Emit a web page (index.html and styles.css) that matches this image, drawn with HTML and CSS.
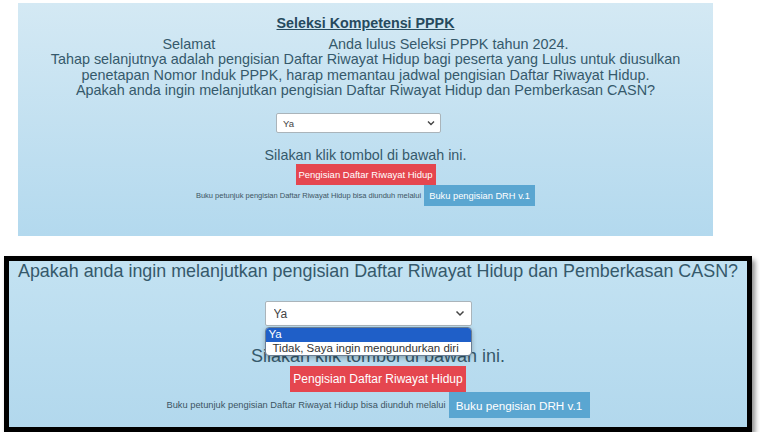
FILE: index.html
```html
<!DOCTYPE html>
<html lang="id">
<head>
    <meta charset="UTF-8">
    <meta name="viewport" content="width=device-width, initial-scale=1.0">
    <title>Seleksi Kompetensi PPPK</title>
    <link rel="stylesheet" href="styles.css">
</head>
<body>
    <div class="panel">
        <h1 class="title">Seleksi Kompetensi PPPK</h1>
        <p class="intro">
            Selamat <span class="name-blank"></span> Anda lulus Seleksi PPPK tahun 2024.<br>
            Tahap selanjutnya adalah pengisian Daftar Riwayat Hidup bagi peserta yang Lulus untuk diusulkan<br>
            penetapan Nomor Induk PPPK, harap memantau jadwal pengisian Daftar Riwayat Hidup.<br>
            Apakah anda ingin melanjutkan pengisian Daftar Riwayat Hidup dan Pemberkasan CASN?
        </p>
        <div class="select-row">
            <div class="select-wrap">
                <select class="choice">
                    <option>Ya</option>
                    <option>Tidak, Saya ingin mengundurkan diri</option>
                </select>
                <svg class="chevron" width="8" height="6" viewBox="0 0 8 6"><path d="M1 1.5 L4 4.5 L7 1.5" fill="none" stroke="#444" stroke-width="1.4"/></svg>
            </div>
        </div>
        <p class="hint">Silakan klik tombol di bawah ini.</p>
        <div class="btn-row">
            <button class="btn btn-red">Pengisian Daftar Riwayat Hidup</button>
        </div>
        <div class="guide-row">
            <span class="guide-text">Buku petunjuk pengisian Daftar Riwayat Hidup bisa diunduh melalui</span>
            <button class="btn btn-blue">Buku pengisian DRH v.1</button>
        </div>
    </div>

    <div class="zoom-frame">
        <div class="zoom-panel">
            <p class="zoom-question">Apakah anda ingin melanjutkan pengisian Daftar Riwayat Hidup dan Pemberkasan CASN?</p>
            <div class="select-row zoom-select-row">
                <div class="select-wrap">
                    <select class="choice zoom-choice">
                        <option>Ya</option>
                        <option>Tidak, Saya ingin mengundurkan diri</option>
                    </select>
                    <svg class="chevron zoom-chevron" width="10" height="7" viewBox="0 0 10 7"><path d="M1.5 1.5 L5 5 L8.5 1.5" fill="none" stroke="#444" stroke-width="1.5"/></svg>
                    <ul class="dropdown">
                        <li class="active">Ya</li>
                        <li>Tidak, Saya ingin mengundurkan diri</li>
                    </ul>
                </div>
            </div>
            <p class="zoom-hint">Silakan klik tombol di bawah ini.</p>
            <div class="btn-row">
                <button class="btn btn-red zoom-btn-red">Pengisian Daftar Riwayat Hidup</button>
            </div>
            <div class="guide-row zoom-guide-row">
                <span class="guide-text zoom-guide-text">Buku petunjuk pengisian Daftar Riwayat Hidup bisa diunduh melalui</span>
                <button class="btn btn-blue zoom-btn-blue">Buku pengisian DRH v.1</button>
            </div>
        </div>
    </div>
</body>
</html>
```

FILE: styles.css
```css
:root {
    --text-color: #35596b;
    --title-color: #264a5e;
    --red: #e5464f;
    --blue: #5aa6d1;
}
body {
    margin: 0;
    padding: 3px 0 0 0;
    background-color: #fff;
    font-family: 'Liberation Sans', Arial, sans-serif;
    color: var(--text-color);
}
.panel {
    margin-left: 18px;
    width: 695px;
    height: 233px;
    box-sizing: border-box;
    padding: 10px 0 0 0;
    background: linear-gradient(to bottom, #d4e9f4, #b3d9ee);
    text-align: center;
}
.title {
    margin: 0 0 4px 0;
    font-size: 14.3px;
    line-height: 20px;
    font-weight: bold;
    text-decoration: underline;
    color: var(--title-color);
}
.intro {
    margin: 0;
    font-size: 14.4px;
    line-height: 15.3px;
}
.name-blank {
    display: inline-block;
    width: 106px;
}
.select-row {
    display: flex;
    justify-content: center;
    padding-right: 14px;
    margin-top: 15px;
}
.select-wrap {
    position: relative;
}
.choice {
    appearance: none;
    -webkit-appearance: none;
    display: block;
    width: 165px;
    height: 20px;
    box-sizing: border-box;
    padding: 0 6px;
    border: 1px solid #aab4ba;
    border-radius: 2px;
    background-color: #fff;
    font-family: inherit;
    font-size: 9.5px;
    color: #444;
}
.chevron {
    position: absolute;
    right: 6px;
    top: 7px;
}
.hint {
    margin: 14px 0 0 0;
    font-size: 14.3px;
    line-height: 17px;
}
.btn-row {
    display: flex;
    justify-content: center;
}
.btn {
    border: none;
    color: #fff;
    font-family: inherit;
    cursor: pointer;
    padding: 0;
}
.btn-red {
    background-color: var(--red);
    width: 140px;
    height: 21px;
    font-size: 9.5px;
}
.btn-blue {
    background-color: var(--blue);
    width: 111px;
    height: 21px;
    font-size: 9.3px;
}
.guide-row {
    display: flex;
    justify-content: center;
    align-items: center;
    gap: 3px;
}
.guide-text {
    font-size: 7.5px;
    color: #3d5563;
}

/* bagian yang diperbesar */
.zoom-frame {
    margin: 20px 0 0 4px;
    width: 748px;
    box-sizing: border-box;
    border: 5px solid #000;
    box-shadow: 3px 4px 5px rgba(0, 0, 0, 0.45);
}
.zoom-panel {
    height: 166px;
    box-sizing: border-box;
    background: linear-gradient(to bottom, #c3e2f2, #b2d8ed);
    text-align: center;
}
.zoom-question {
    margin: 0;
    font-size: 17.9px;
    line-height: 20px;
}
.zoom-select-row {
    margin-top: 20px;
    padding-right: 20px;
}
.zoom-choice {
    width: 207px;
    height: 25px;
    padding: 0 8px;
    font-size: 12px;
}
.zoom-chevron {
    right: 7px;
    top: 9px;
}
.dropdown {
    position: absolute;
    left: 0;
    top: 26px;
    width: 207px;
    margin: 0;
    padding: 0;
    list-style: none;
    box-sizing: border-box;
    border: 1px solid #6b7f94;
    border-radius: 4px;
    overflow: hidden;
    background-color: #fff;
    text-align: left;
    box-shadow: 0 2px 5px rgba(0, 0, 0, 0.25);
    z-index: 2;
}
.dropdown li {
    height: 13.5px;
    line-height: 13.5px;
    padding: 0 7px;
    font-size: 11.5px;
    color: #333;
}
.dropdown li.active {
    background-color: #1f5fc8;
    color: #fff;
    padding-left: 3px;
}
.zoom-hint {
    margin: 20px 0 0 0;
    font-size: 18px;
    line-height: 20px;
}
.zoom-btn-red {
    width: 176px;
    height: 26px;
    font-size: 12px;
}
.zoom-guide-row {
    gap: 3px;
}
.zoom-btn-blue {
    width: 141px;
    height: 26px;
    font-size: 11.7px;
}
.zoom-guide-text {
    font-size: 9.3px;
}
```
